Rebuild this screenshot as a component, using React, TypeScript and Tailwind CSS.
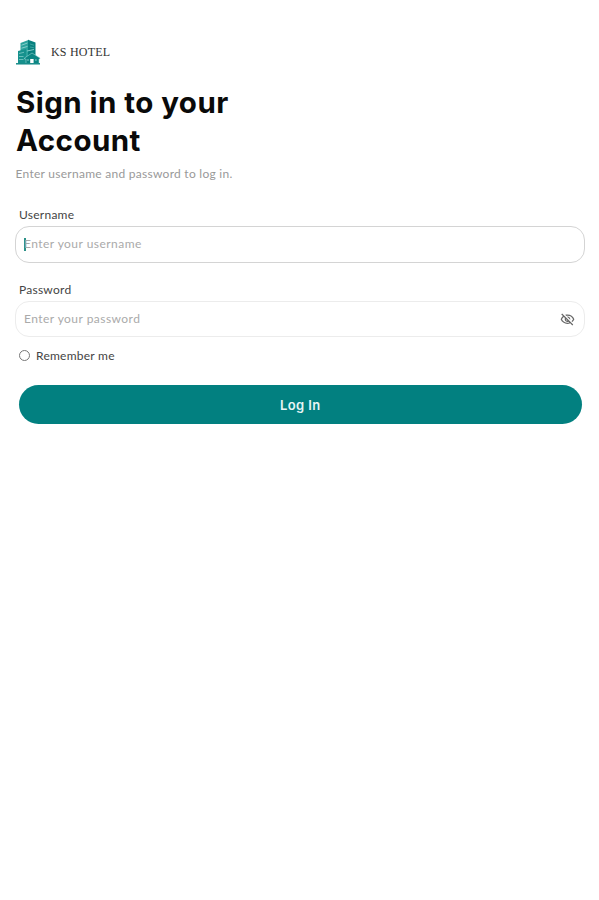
import { useState } from "react";
import { MdOutlineVisibilityOff } from "react-icons/md";

function HotelLogo() {
  return (
    <svg viewBox="0 0 26 26" className="h-[26px] w-[26px]" fill="none">
      <path d="M5.5 4 L14 0.8 V19 H5.5 Z" fill="#2ba29c" />
      <path d="M13 0.8 L20.5 3.5 V20 H13 Z" fill="#08807f" />
      <path d="M3 12 L11 10 V24.5 H3 Z" fill="#16918d" />
      <path d="M6.5 6.2 L12.5 4 M6.5 9.2 L12.5 7.4 M12 12 L19 10.5" stroke="#8fd3cf" strokeWidth="0.9" />
      <path d="M15 5 L19 6.2 M15 8 L19 8.8" stroke="#4fb3ae" strokeWidth="0.7" />
      <path d="M4 14.5 L9 13.3 M4 17.5 H8.5 M4 20.5 H8.5" stroke="#7fcbc6" strokeWidth="0.8" />
      <path d="M9.5 19 L17 14 L25 19 V20 H24 V24.5 H11 V20 H9.5 Z" fill="#0b8583" stroke="#b5e3e0" strokeWidth="0.5" />
      <rect x="15.2" y="20" width="3.4" height="4.5" fill="#fff" />
      <path d="M12.3 21 H13.7 M20.2 21 H21.6" stroke="#b5e3e0" strokeWidth="1.2" />
      <path d="M1 24.8 H25" stroke="#0b8583" strokeWidth="1.4" />
    </svg>
  );
}

export default function App() {
  const [username, setUsername] = useState("");
  const [password, setPassword] = useState("");
  const [showPassword, setShowPassword] = useState(false);
  const [remember, setRemember] = useState(false);

  return (
    <div className="min-h-screen bg-white pt-[39px] pr-[14px] pl-[15px] font-['Lato',sans-serif] text-[12px] leading-[18px]">
      <div className="flex items-center gap-[10px]">
        <HotelLogo />
        <span className="font-['Liberation_Serif',serif] text-[12px] tracking-[0.2px] text-[#333]">KS HOTEL</span>
      </div>

      <h1 className="mt-[18px] w-[260px] pl-px font-['Inter',sans-serif] text-[29.5px] leading-[38px] font-bold tracking-[0.45px] text-[#0a0a0a]">
        Sign in to your Account
      </h1>
      <p className="mt-[6px] pl-[0.5px] tracking-[0.27px] text-[#999]">Enter username and password to log in.</p>

      <form onSubmit={(e) => e.preventDefault()}>
        <label htmlFor="username" className="mt-[23px] block pl-[4px] tracking-[0.25px] text-[#444]">
          Username
        </label>
        <div className="mt-[2px] flex h-[37px] items-center rounded-[14px] border border-[#d4d4d4] pr-4 pb-px pl-[8px]">
          {!username && <span className="-mr-[2px] h-[13px] w-[2px] bg-[#2b9188]" />}
          <input
            id="username"
            value={username}
            onChange={(e) => setUsername(e.target.value)}
            placeholder="Enter your username"
            className="min-w-0 flex-1 tracking-[0.46px] text-[#444] outline-none placeholder:text-[#aaa]"
          />
        </div>

        <label htmlFor="password" className="mt-[18px] block pl-[4px] tracking-[0.25px] text-[#444]">
          Password
        </label>
        <div className="mt-[2px] flex h-[36px] items-center rounded-[14px] border border-[#ececec] pr-[9px] pl-[8px]">
          <input
            id="password"
            type={showPassword ? "text" : "password"}
            value={password}
            onChange={(e) => setPassword(e.target.value)}
            placeholder="Enter your password"
            className="min-w-0 flex-1 tracking-[0.46px] text-[#444] outline-none placeholder:text-[#aaa]"
          />
          <button type="button" aria-label="Toggle password" onClick={() => setShowPassword(!showPassword)}>
            <MdOutlineVisibilityOff className="h-[15px] w-[15px] text-[#666]" />
          </button>
        </div>

        <label className="mt-[10px] flex items-center gap-[6px] pl-[4px] tracking-[0.25px] text-[#444]">
          <input
            type="checkbox"
            checked={remember}
            onChange={(e) => setRemember(e.target.checked)}
            className="-mt-px h-[11px] w-[11px] appearance-none rounded-full border border-[#777] checked:bg-[#008080]"
          />
          Remember me
        </label>

        <div className="mt-[20px] pr-[3px] pl-[3.5px]">
          <button className="h-[39px] w-full rounded-full bg-[#028080] font-['Inter',sans-serif] text-[13px] font-semibold tracking-[0.4px] text-[#e8f5f5]">
            Log In
          </button>
        </div>
      </form>
    </div>
  );
}
